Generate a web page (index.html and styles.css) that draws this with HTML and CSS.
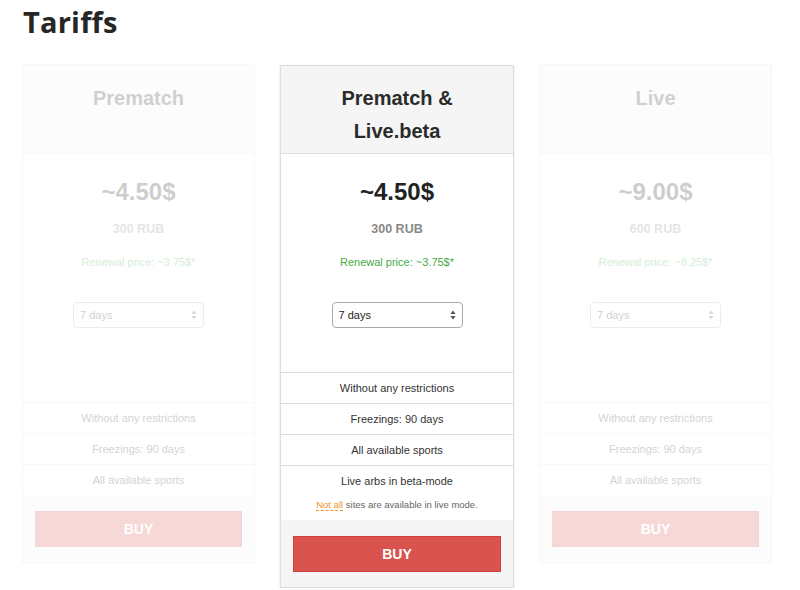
FILE: index.html
```html
<!DOCTYPE html>
<html>
<head>
<meta charset="utf-8">
<title>Tariffs</title>
<link rel="stylesheet" href="styles.css">
</head>
<body>
<div class="page">
  <h1 class="title">Tariffs</h1>
  <div class="plans">
    <div class="plan plan-dim">
      <div class="plan-head"><h2 class="plan-name">Prematch</h2></div>
      <div class="plan-body plan-body-tall">
        <div class="price">~4.50$</div>
        <div class="rub">300 RUB</div>
        <div class="renew">Renewal price: ~3.75$*</div>
        <div class="select"><span>7 days</span>
          <svg class="arrows" width="6" height="10" viewBox="0 0 6 10"><path d="M3 0.5 L5.6 4 H0.4 Z M3 9.5 L5.6 6 H0.4 Z" fill="#555"/></svg>
        </div>
      </div>
      <ul class="features">
        <li>Without any restrictions</li>
        <li>Freezings: 90 days</li>
        <li>All available sports</li>
      </ul>
      <div class="plan-foot"><button class="buy">BUY</button></div>
    </div>

    <div class="plan plan-main">
      <div class="plan-head"><h2 class="plan-name">Prematch &amp;<br>Live.beta</h2></div>
      <div class="plan-body">
        <div class="price">~4.50$</div>
        <div class="rub">300 RUB</div>
        <div class="renew">Renewal price: ~3.75$*</div>
        <div class="select"><span>7 days</span>
          <svg class="arrows" width="6" height="10" viewBox="0 0 6 10"><path d="M3 0.5 L5.6 4 H0.4 Z M3 9.5 L5.6 6 H0.4 Z" fill="#555"/></svg>
        </div>
      </div>
      <ul class="features">
        <li>Without any restrictions</li>
        <li>Freezings: 90 days</li>
        <li>All available sports</li>
        <li class="feature-last">Live arbs in beta-mode
          <div class="note"><span class="note-link">Not all</span> sites are available in live mode.</div>
        </li>
      </ul>
      <div class="plan-foot"><button class="buy">BUY</button></div>
    </div>

    <div class="plan plan-dim">
      <div class="plan-head"><h2 class="plan-name">Live</h2></div>
      <div class="plan-body plan-body-tall">
        <div class="price">~9.00$</div>
        <div class="rub">600 RUB</div>
        <div class="renew">Renewal price: ~8.25$*</div>
        <div class="select"><span>7 days</span>
          <svg class="arrows" width="6" height="10" viewBox="0 0 6 10"><path d="M3 0.5 L5.6 4 H0.4 Z M3 9.5 L5.6 6 H0.4 Z" fill="#555"/></svg>
        </div>
      </div>
      <ul class="features">
        <li>Without any restrictions</li>
        <li>Freezings: 90 days</li>
        <li>All available sports</li>
      </ul>
      <div class="plan-foot"><button class="buy">BUY</button></div>
    </div>
  </div>
</div>
</body>
</html>
```
FILE: styles.css
```css
html, body {
  margin: 0;
  padding: 0;
  background: #fff;
}
body {
  font-family: "Liberation Sans", Arial, sans-serif;
  color: #333;
}
.page {
  padding: 0 22px;
}
.title {
  margin: 0;
  padding-top: 4px;
  height: 60px;
  font-family: "Open Sans", "DejaVu Sans", sans-serif;
  font-weight: 700;
  font-size: 29px;
  letter-spacing: 0.2px;
  line-height: 36px;
  color: #262626;
  padding-left: 1px;
  box-sizing: border-box;
}
.plans {
  display: grid;
  grid-template-columns: 233px 234px 233px;
  column-gap: 25px;
  align-items: start;
  margin-top: 4px;
}
.plan {
  border: 1px solid #ddd;
  background: #fff;
  box-sizing: border-box;
}
.plan-dim {
  opacity: 0.22;
}
.plan-main {
  margin-top: 1px;
  box-shadow: 0 1px 2px rgba(0,0,0,0.12);
}
.plan-head {
  height: 89px;
  padding-top: 17px;
  background: #f5f5f5;
  border-bottom: 1px solid #ddd;
  box-sizing: border-box;
}
.plan-main .plan-head {
  height: 88px;
  padding-top: 16px;
}
.plan-name {
  margin: 0;
  font-size: 20px;
  font-weight: 700;
  line-height: 33px;
  text-align: center;
  color: #2b2b2b;
}
.plan-body {
  padding: 24px 0 44px;
  text-align: center;
  display: flex;
  flex-direction: column;
  align-items: center;
}
.plan-body-tall {
  padding-bottom: 74px;
}
.price {
  font-size: 24px;
  font-weight: 700;
  line-height: 28px;
  color: #222;
}
.rub {
  margin-top: 14px;
  font-size: 12.5px;
  font-weight: 700;
  line-height: 18px;
  color: #888;
}
.renew {
  margin-top: 16px;
  font-size: 11px;
  line-height: 16px;
  color: #45ab45;
}
.select {
  margin-top: 32px;
  width: 131px;
  height: 26px;
  box-sizing: border-box;
  border: 1px solid #aaa;
  border-radius: 4px;
  background: #fff;
  display: flex;
  align-items: center;
  justify-content: space-between;
  padding: 0 6px 0 6px;
  font-size: 11px;
  color: #222;
}
.arrows {
  display: block;
}
.features {
  list-style: none;
  margin: 0;
  padding: 0;
}
.features li {
  border-top: 1px solid #ddd;
  height: 31px;
  box-sizing: border-box;
  line-height: 30px;
  font-size: 11px;
  text-align: center;
  color: #333;
}
.features .feature-last {
  height: auto;
  padding-bottom: 8px;
}
.note {
  margin-top: 2px;
  font-size: 9.5px;
  line-height: 14px;
  color: #666;
}
.note-link {
  color: #f0932b;
  border-bottom: 1px dashed #f0932b;
}
.plan-foot {
  background: #f5f5f5;
  padding: 16px 12px 15px;
}
.buy {
  display: block;
  width: 100%;
  height: 36px;
  border: 1px solid #d43f3a;
  background: #d9534f;
  color: #fff;
  font-family: "Liberation Sans", Arial, sans-serif;
  font-weight: 700;
  font-size: 14px;
  border-radius: 0;
  padding: 0;
  cursor: pointer;
}
```
